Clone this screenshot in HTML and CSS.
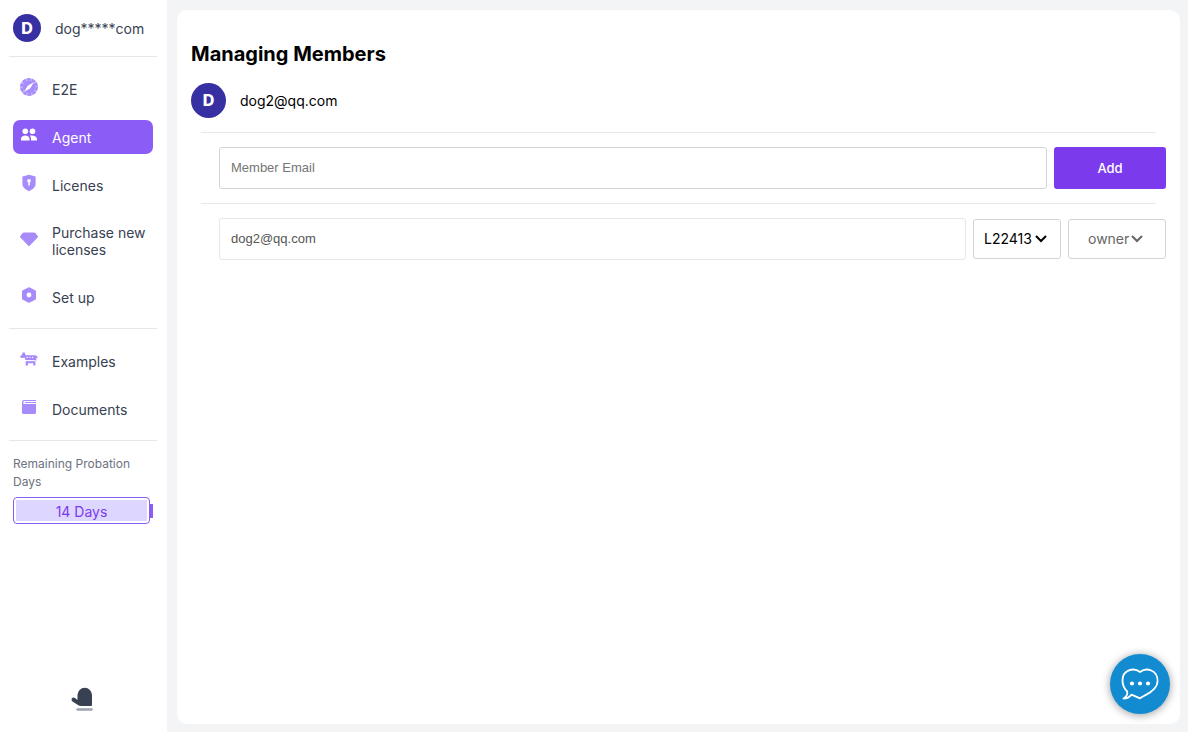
FILE: index.html
```html
<!DOCTYPE html>
<html lang="en">
<head>
<meta charset="utf-8">
<meta name="viewport" content="width=device-width, initial-scale=1">
<title>Managing Members</title>
<link rel="stylesheet" href="styles.css">
</head>
<body>
<div class="app">
  <aside class="sidebar">
    <div class="account">
      <span class="avatar avatar-small">D</span>
      <span>dog*****com</span>
    </div>
    <nav class="nav">
      <div class="nav-group">
        <a class="nav-item" href="#">
          <svg class="icon" viewBox="0 0 18 18"><circle cx="9" cy="9" r="9" fill="#c4b5fd"/><circle cx="9" cy="9" r="7.6" fill="none" stroke="#a78bfa" stroke-width="2.4" stroke-dasharray="3.4 1.4"/><circle cx="9" cy="9" r="6.2" fill="#a78bfa"/><path d="M14 4 10.3 10.3 4 14 7.7 7.7Z" fill="#fff"/></svg>
          <span>E2E</span>
        </a>
        <a class="nav-item active" href="#" aria-current="page">
          <svg class="icon" viewBox="0 0 18 18"><circle cx="5.3" cy="5.2" r="2.8" fill="#fff"/><circle cx="12.5" cy="5.2" r="2.800" fill="#fff"/><path d="M1 14.500v-1.500C1 10.800 3 9.500 5.300 9.500s4.300 1.300 4.300 3.500v1.500ZM11 14.500v-1.700c0-1.400-.5-2.400-1.300-3.200 3.800-.7 7.300.6 7.300 3.400v1.500Z" fill="#fff"/></svg>
          <span>Agent</span>
        </a>
        <a class="nav-item" href="#">
          <svg class="icon" viewBox="0 0 18 18"><path d="M9 .8 15.600 2.600V10c0 3.200-3 5.600-6.600 7.200C5.400 15.600 2.400 13.200 2.400 10V2.600Z" fill="#a78bfa"/><circle cx="9" cy="6.700" r="1.800" fill="#fff"/><path d="M8.300 7h1.500v4.500H8.300Z" fill="#fff"/></svg>
          <span>Licenes</span>
        </a>
        <a class="nav-item" href="#">
          <svg class="icon" viewBox="0 0 18 18"><path d="M4 2.500h10q1 0 1.600.8L17.700 6q.6.8-.1 1.500L9.700 15.800q-.7.7-1.400 0L.4 7.500Q-.3 6.800.3 6l2.100-2.700Q3 2.500 4 2.500Z" fill="#a78bfa"/></svg>
          <span>Purchase new licenses</span>
        </a>
        <a class="nav-item" href="#">
          <svg class="icon" viewBox="0 0 18 18"><path fill-rule="evenodd" d="M8.200 1.500q.8-.4 1.600 0l5.400 2.800q.8.4.8 1.300v6.800q0 .9-.8 1.300l-5.400 2.800q-.8.4-1.600 0l-5.400-2.800Q2 13.300 2 12.400V5.600q0-.9.8-1.300ZM9 6.600a2.400 2.400 0 1 0 0 4.800 2.400 2.400 0 0 0 0-4.800Z" fill="#a78bfa"/></svg>
          <span>Set up</span>
        </a>
      </div>
      <div class="nav-group">
        <a class="nav-item" href="#">
          <svg class="icon" viewBox="0 0 18 18"><path d="M2.500 4 2.300 2l1.300 1L4 1.500l1.800 3.800h9.200q2.300 0 2.900 3.200l-1.400-1.200-.2 3.200H7Q5 10.500 4.700 7.700L1.200 8 0 6.400Z" fill="#a78bfa"/><path d="M5.700 11h9.700v4.500h-2.100v-2.300H8v2.300H5.700Z" fill="#a78bfa"/><path d="M6.500 7.500H8M9.300 7.500h1.200M12 7.500h1.200M6 10.700h9" stroke="#fff"/></svg>
          <span>Examples</span>
        </a>
        <a class="nav-item" href="#">
          <svg class="icon" viewBox="0 0 18 18"><path d="M4 2h12v1H4.500Q3.200 3 3.200 4.500T4.500 6H16v8.500q0 1.500-1.500 1.500h-11Q2 16 2 14.500V4q0-2 2-2Z" fill="#a78bfa"/><path d="M5 4h11v1H5Z" fill="#a78bfa"/></svg>
          <span>Documents</span>
        </a>
      </div>
    </nav>
    <section class="probation">
      <p class="probation-label">Remaining Probation Days</p>
      <div class="battery">
        <div class="battery-body"><div class="battery-fill">14 Days</div></div>
        <span class="battery-tip"></span>
      </div>
    </section>
    <button class="mitten" type="button" aria-label="Collapse">
      <svg viewBox="0 0 24 26" width="24" height="26"><path d="M6.500 19V9a7 7 0 0 1 14.500 0v10q0 1-1 1H10Q7.500 20 5.800 18.200L1.500 15.600Q0 14.400.7 12.500 2 10.700 4 12l2.500 2Z" fill="#374151"/><path d="M6.500 23.500h14" stroke="#9ca3af" stroke-width="2.500" stroke-linecap="round"/></svg>
    </button>
  </aside>

  <main class="content">
    <div class="card">
      <h1 class="title">Managing Members</h1>
      <div class="owner">
        <span class="avatar avatar-large">D</span>
        <span>dog2@qq.com</span>
      </div>
      <form class="row">
        <input class="field" type="email" placeholder="Member Email" aria-label="Member Email">
        <button class="add" type="button">Add</button>
      </form>
      <div class="row">
        <input class="field field-member" type="email" value="dog2@qq.com" aria-label="Member" disabled>
        <div class="picker">
          <select class="select select-license" aria-label="License"><option>L22413</option></select>
          <svg class="chevron" viewBox="0 0 12 8"><path d="m1 1 5 5 5-5"/></svg>
        </div>
        <div class="picker picker-role">
          <select class="select select-role" aria-label="Role" disabled><option>owner</option></select>
          <svg class="chevron" viewBox="0 0 12 8"><path d="m1 1 5 5 5-5"/></svg>
        </div>
      </div>
    </div>
  </main>
</div>
<button class="chat" type="button" aria-label="Open chat">
  <svg viewBox="0 0 60 60" width="60" height="60"><path d="M30 18C23.500 13 12.500 16 12.500 26.500c0 4.500 1.700 8 4.700 11 .6 2.800-.8 5.200-3.700 7 3.300 0 6-1.200 8-3.900L30 44.400c1.500-1.500 3.500-2.200 5.500-3.300C42.500 37.500 47.600 33 47.600 27 47.600 16 36.500 13 30 18Z" fill="none" stroke="#fff" stroke-width="1.800" stroke-linejoin="round"/><circle cx="22" cy="29.500" r="2.100" fill="#fff"/><circle cx="30" cy="29.500" r="2.100" fill="#fff"/><circle cx="38" cy="29.500" r="2.100" fill="#fff"/></svg>
</button>
</body>
</html>
```
FILE: styles.css
```css
* {
  box-sizing: border-box;
}

body {
  margin: 0;
  background: #f3f4f6;
  color: #000;
  font: 14px/17px Inter, "Liberation Sans", sans-serif;
}

.app {
  display: flex;
  min-height: 100vh;
}

.sidebar {
  display: flex;
  flex: none;
  flex-direction: column;
  width: 167px;
  padding: 14px 10px 20px 9px;
  background: #fff;
  color: #374151;
}

.account {
  display: flex;
  align-items: center;
  gap: 14px;
  padding: 0 4px 14px;
}

.avatar {
  display: grid;
  flex: none;
  place-items: center;
  border-radius: 50%;
  background: #3730a3;
  color: #fff;
  font-size: 16px;
  font-weight: 800;
}

.avatar-small {
  width: 28px;
  height: 28px;
}

.avatar-large {
  width: 35px;
  height: 35px;
}

.nav-group {
  display: flex;
  flex-direction: column;
  gap: 14px;
  padding: 15px 4px 14px;
  border-top: 1px solid #e5e7eb;
}

.nav-item {
  display: flex;
  align-items: center;
  gap: 14px;
  min-height: 34px;
  padding: 8px 7px;
  border-radius: 7px;
  color: #374151;
  text-decoration: none;
}

.nav-item.active {
  background: #8b5cf6;
  color: #fff;
}

.icon {
  flex: none;
  width: 18px;
  height: 18px;
  margin-top: -4px;
}

.probation {
  padding: 14px 4px;
  border-top: 1px solid #e5e7eb;
}

.probation-label {
  margin: 0 0 6px;
  color: #6b7280;
  font-size: 12px;
  line-height: 18px;
}

.battery {
  display: flex;
  align-items: center;
}

.battery-body {
  flex: 1;
  padding: 2px;
  border: 1px solid #8b5cf6;
  border-radius: 4px;
}

.battery-fill {
  padding: 3px 0 1px;
  background: #ddd6fe;
  color: #7c3aed;
  text-align: center;
}

.battery-tip {
  width: 3px;
  height: 14px;
  background: #8b5cf6;
}

.mitten {
  align-self: center;
  margin-top: auto;
  padding: 0;
  border: 0;
  background: none;
}

.mitten svg,
.chat svg {
  display: block;
}

.content {
  display: flex;
  flex: 1;
  min-width: 0;
  padding: 10px 8px 8px 10px;
}

.card {
  flex: 1;
  min-width: 0;
  padding: 30px 14px;
  border-radius: 10px;
  background: #fff;
}

.title {
  margin: 0 0 15px;
  font-size: 20px;
  font-weight: 700;
  line-height: 28px;
}

.owner {
  display: flex;
  align-items: center;
  gap: 14px;
  margin-bottom: 14px;
}

.row {
  display: flex;
  flex-wrap: wrap;
  align-items: center;
  gap: 14px 7px;
  margin-bottom: 14px;
  padding-left: 28px;
}

.row::before {
  flex: 0 0 calc(100% + 8px);
  height: 1px;
  margin: 0 10px 0 -18px;
  background: #e5e7eb;
  content: "";
}

.field {
  flex: 1;
  min-width: 0;
  height: 42px;
  padding: 0 11px 2px;
  border: 1px solid #d1d5db;
  border-radius: 3px;
  background: #fff;
  font: 13px "Liberation Sans", Arial, sans-serif;
}

.field::placeholder {
  color: #757575;
}

.field-member {
  border-color: #e5e7eb;
  color: #545454;
}

.add {
  width: 112px;
  height: 42px;
  border: 0;
  border-radius: 3px;
  background: #7c3aed;
  color: #fff;
  font: 500 13px Inter, "Liberation Sans", sans-serif;
}

.picker {
  position: relative;
  width: 88px;
}

.picker-role {
  width: 98px;
}

.select {
  display: block;
  width: 100%;
  height: 40px;
  padding: 0 10px 1px;
  border: 1px solid #d1d5db;
  border-radius: 3px;
  appearance: none;
  background: #fff;
  color: #000;
  font: 14px Inter, "Liberation Sans", sans-serif;
}

.select-role {
  padding-left: 19px;
  color: #666;
  opacity: 1;
}

.chevron {
  position: absolute;
  top: 16px;
  right: 14px;
  width: 12px;
  height: 8px;
  fill: none;
  pointer-events: none;
  stroke: #000;
  stroke-width: 2;
}

.picker-role .chevron {
  right: 23px;
  stroke: #666;
}

.chat {
  position: fixed;
  right: 18px;
  bottom: 18px;
  padding: 0;
  border: 0;
  border-radius: 50%;
  background: #128bd1;
  box-shadow: 0 1px 8px rgb(0 0 0 / 40%);
}
```
